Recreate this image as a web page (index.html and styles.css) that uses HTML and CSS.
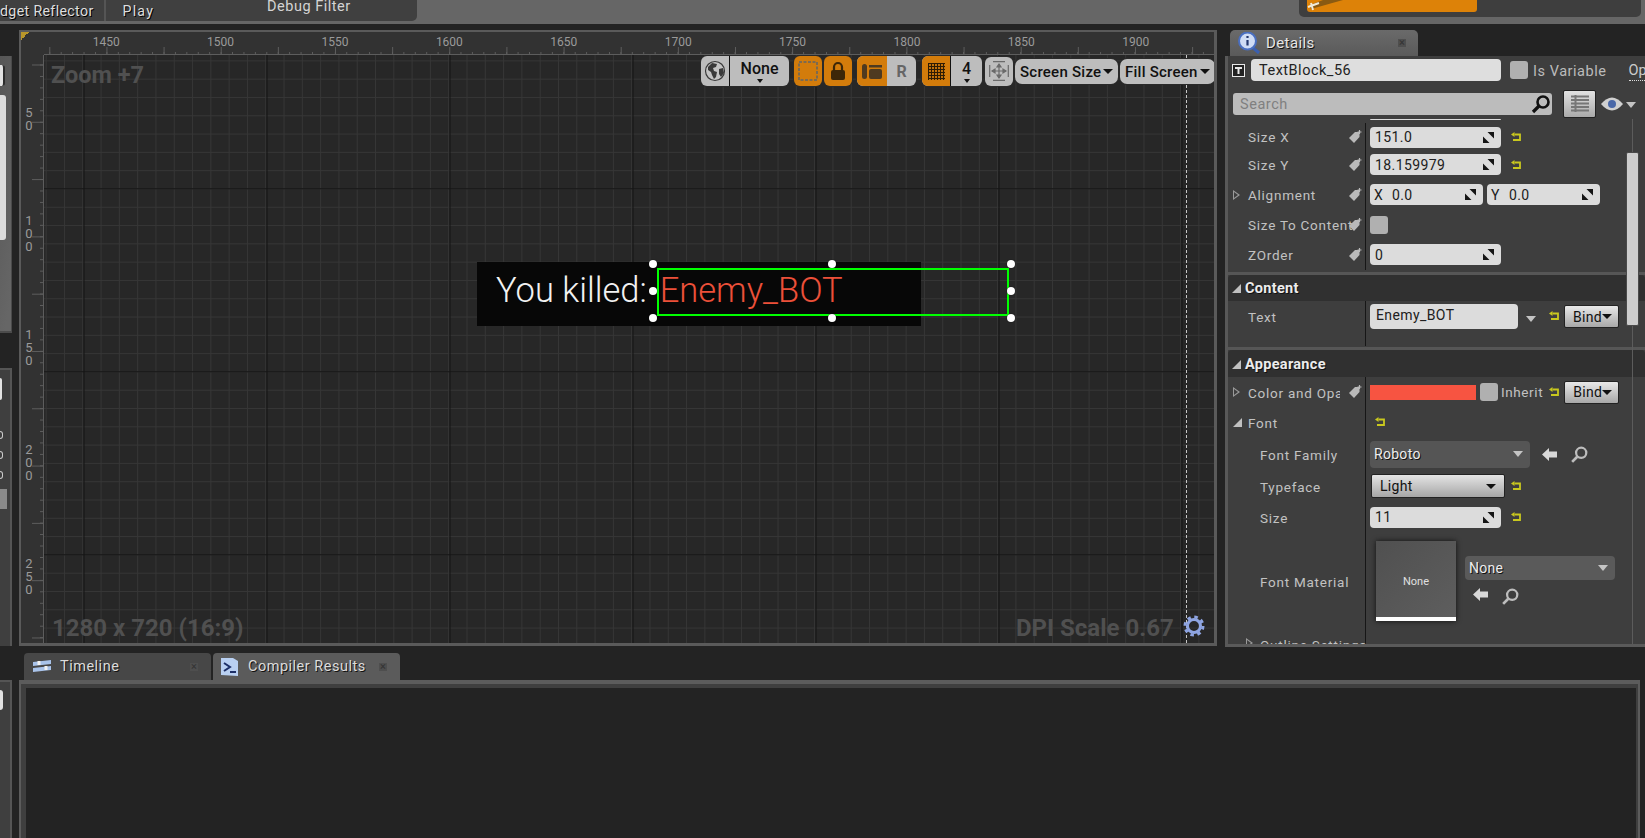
FILE: index.html
```html
<!DOCTYPE html>
<html lang="en">
<head>
<meta charset="utf-8">
<title>Widget Designer</title>
<link rel="stylesheet" href="styles.css">
</head>
<body>
<svg class="defs" width="0" height="0">
  <symbol id="spin" viewBox="0 0 11 11"><path d="M0 11V4.500L6.500 11zM11 0v6.500L4.500 0z" fill="#151515"/></symbol>
  <symbol id="reset" viewBox="0 0 10 10"><path d="M3.500 2.500H9V8H2" fill="none" stroke="#c9c81e" stroke-width="1.800"/><path d="M0 2.500L3.500 0v5z" fill="#c9c81e"/></symbol>
  <symbol id="tag" viewBox="0 0 13 13"><path d="M0 8L6 2h4.500v5l-5.500 6z" fill="#b9b9b9"/><path d="M10.500 0v4M8.500 2h4" stroke="#b9b9b9" stroke-width="1.200"/></symbol>
  <symbol id="back" viewBox="0 0 15 13"><path d="M0 6.500L7 0v3.500h8v6H7V13z" fill="#d8d8d8"/></symbol>
  <symbol id="find" viewBox="0 0 15 15"><circle cx="9" cy="6" r="4.500" fill="none" stroke="#bdbdbd" stroke-width="2"/><path d="M5.500 9.500L1 14" stroke="#bdbdbd" stroke-width="2.400"/></symbol>
</svg>

<header class="topbar">
  <div class="tb-left">
    <span class="tb-text tb-reflector">dget Reflector</span>
    <span class="tb-sep"></span>
    <span class="tb-text tb-play">Play</span>
    <span class="tb-filter">Debug Filter</span>
  </div>
  <div class="tb-right">
    <div class="tb-orange">
      <svg class="tb-hammer" width="38" height="12" viewBox="0 0 38 12"><path d="M4 9L36 0H16L3 5z" fill="#8a5a12"/><path d="M1 7L12 3M4 3l2 7" stroke="#f0ead8" stroke-width="2"/></svg>
    </div>
  </div>
</header>

<main class="main">
  <aside class="strip">
    <div class="strip-a">
      <div class="pill-top pill-ring"></div>
      <div class="list-box"></div>
    </div>
    <div class="strip-b">
      <div class="pill-top pill-b"></div>
      <div class="diamond"></div>
      <div class="diamond"></div>
      <div class="diamond"></div>
      <div class="diamond diamond-on"></div>
    </div>
  </aside>

  <section class="designer">
    <div class="corner"></div>
    <div class="ruler-top">
      <span>1450</span><span>1500</span><span>1550</span><span>1600</span><span>1650</span><span>1700</span><span>1750</span><span>1800</span><span>1850</span><span>1900</span>
    </div>
    <div class="ruler-left">
      <span>50</span><span>100</span><span>150</span><span>200</span><span>250</span>
    </div>
    <div class="canvas">
      <div class="guide"></div>
      <div class="hud hud-zoom">Zoom +7</div>
      <div class="hud hud-res">1280 x 720 (16:9)</div>
      <div class="hud hud-dpi">DPI Scale 0.67</div>
      <svg class="gear" width="22" height="22" viewBox="0 0 22 22"><circle cx="11" cy="11" r="6.500" fill="none" stroke="#8fa5e2" stroke-width="3"/><circle cx="11" cy="11" r="9" fill="none" stroke="#8fa5e2" stroke-width="3" stroke-dasharray="3.500 3.570"/></svg>

      <div class="toolbar">
        <div class="tgroup tgroup-world">
          <div class="tcell tcell-globe">
            <svg width="22" height="22" viewBox="0 0 22 22"><circle cx="11" cy="11" r="9.500" fill="#c4c4c4" stroke="#3a3a3a" stroke-width="1.200"/><path d="M4 7l4-4 5 1-1 3-3 1 1 3 3 1-1 5-2 2-2-4-1-3-3-2zM15 9l4-1 1 5-3 4-2-3z" fill="#3a3a3a"/></svg>
          </div>
          <div class="tcell tcell-none"><b>None</b><i class="caret"></i></div>
        </div>
        <div class="tgroup tgroup-on tgroup-single">
          <svg width="20" height="20" viewBox="0 0 20 20"><rect x="1" y="1" width="18" height="18" fill="none" stroke="#7d6a50" stroke-width="2" stroke-dasharray="3 1.500"/></svg>
        </div>
        <div class="tgroup tgroup-on tgroup-single tgroup-lock">
          <svg width="18" height="20" viewBox="0 0 18 20"><path d="M5 9V6a4 4 0 0 1 8 0v3" fill="none" stroke="#3d2708" stroke-width="2.200"/><rect x="2" y="9" width="14" height="10" rx="2" fill="#3d2708"/></svg>
        </div>
        <div class="tgroup tgroup-pair">
          <div class="tcell tcell-on tcell-layout">
            <svg width="20" height="18" viewBox="0 0 20 18"><rect x="0" y="2" width="5" height="15" rx="2.500" fill="#4e3a20"/><rect x="7" y="3" width="13" height="2.500" fill="#4e3a20"/><rect x="7" y="7" width="13" height="10" rx="2" fill="#4e3a20"/></svg>
          </div>
          <div class="tcell tcell-r">R</div>
        </div>
        <div class="tgroup tgroup-grid">
          <div class="tcell tcell-on tcell-gridicon">
            <svg width="17" height="17" viewBox="0 0 17 17"><path d="M.5 0v17M3.500 0v17M6.500 0v17M9.500 0v17M12.500 0v17M15.500 0v17M0 .5h17M0 3.500h17M0 6.500h17M0 9.500h17M0 12.500h17M0 15.500h17" stroke="#2d1c05" stroke-width="1.200"/></svg>
          </div>
          <div class="tcell tcell-four"><b>4</b><i class="caret"></i></div>
        </div>
        <div class="tgroup tgroup-move">
          <svg width="20" height="20" viewBox="0 0 20 20" fill="none" stroke="#6a6a6a" stroke-width="1.200"><path d="M4 .7h12M4 19.300h12M.7 4v12M19.300 4v12M10 3v14M3 10h14"/><path d="M10 3L8 6h4zM10 17l-2-3h4zM3 10l3-2v4zM17 10l-3-2v4z" fill="#6a6a6a"/></svg>
        </div>
        <div class="tcombo tcombo-screen">Screen Size<i class="caret-lg"></i></div>
        <div class="tcombo tcombo-fill">Fill Screen<i class="caret-lg"></i></div>
      </div>

      <div class="widget">
        <span class="w-white">You killed:</span><span class="w-red">Enemy_BOT</span>
        <div class="w-select"></div>
        <div class="w-handles">
          <i></i><i></i><i></i><i></i><b></b><i></i><i></i><i></i><i></i>
        </div>
      </div>
    </div>
  </section>

  <section class="details">
    <div class="d-tab">
      <svg class="d-tab-icon" width="22" height="22" viewBox="0 0 22 22"><path d="M14 15l7 6" stroke="#3a5fb0" stroke-width="3"/><circle cx="9.500" cy="9" r="8.500" fill="#cfdcf5" stroke="#4a6fc0" stroke-width="2"/><path d="M9.500 4v2M9.500 8v5.500" stroke="#24386e" stroke-width="2.200"/></svg>
      <span class="d-tab-title">Details</span>
      <span class="close">×</span>
    </div>
    <div class="d-panel">
      <div class="d-name">
        <svg class="t-icon" width="13" height="13" viewBox="0 0 13 13"><rect width="13" height="13" fill="#e8e8e8"/><rect x="1" y="1" width="11" height="11" fill="#222"/><path d="M3 3h7v2H7.500v5h-2V5H3z" fill="#e8e8e8"/></svg>
        <div class="name-input">TextBlock_56</div>
        <div class="check"></div>
        <span class="isvar">Is Variable</span>
        <span class="op">Op</span>
      </div>
      <div class="d-search">
        <div class="search">
          <span>Search</span>
          <svg width="20" height="20" viewBox="0 0 20 20"><circle cx="12" cy="8" r="5.500" fill="none" stroke="#111" stroke-width="2.600"/><path d="M8 12l-6 6" stroke="#111" stroke-width="3.200"/></svg>
        </div>
        <div class="viewbtn">
          <svg width="18" height="18" viewBox="0 0 18 18"><path d="M0 1.500h18M0 5h18M0 8.500h18M0 12h18M0 15.500h18M4.500 0v17" stroke="#777" stroke-width="2"/></svg>
        </div>
        <svg class="eye" width="22" height="14" viewBox="0 0 22 14"><path d="M0 7q11-13 22 0q-11 13-22 0z" fill="#d0d0d0"/><circle cx="11" cy="7" r="4" fill="#4a68a8"/></svg>
        <i class="caret-soft"></i>
      </div>
      <div class="d-body">
        <div class="scroll-line"></div>
        <div class="scroll-thumb"></div>

        <div class="d-section d-section-first">
          <div class="clip-top"><div></div></div>
          <div class="row h28"><div class="lab">Size X<svg class="tag"><use href="#tag"/></svg></div><div class="val"><div class="num w131">151.0<svg class="spin"><use href="#spin"/></svg></div><svg class="rst"><use href="#reset"/></svg></div></div>
          <div class="row h27"><div class="lab">Size Y<svg class="tag"><use href="#tag"/></svg></div><div class="val"><div class="num w131">18.159979<svg class="spin"><use href="#spin"/></svg></div><svg class="rst"><use href="#reset"/></svg></div></div>
          <div class="row h33"><div class="lab"><i class="tri-open"></i>Alignment<svg class="tag"><use href="#tag"/></svg></div><div class="val"><div class="num w113"><em>X</em>0.0<svg class="spin"><use href="#spin"/></svg></div><div class="num w113"><em>Y</em>0.0<svg class="spin"><use href="#spin"/></svg></div></div></div>
          <div class="row h28"><div class="lab">Size To Content<svg class="tag"><use href="#tag"/></svg></div><div class="val"><div class="check check-row"></div></div></div>
          <div class="row h33 h-last"><div class="lab">ZOrder<svg class="tag"><use href="#tag"/></svg></div><div class="val"><div class="num w131">0<svg class="spin"><use href="#spin"/></svg></div></div></div>
        </div>

        <div class="d-section d-section-content">
          <div class="sec-head"><i class="tri-down"></i>Content</div>
          <div class="row h45"><div class="lab lab-top">Text</div><div class="val val-top">
            <div class="text-input">Enemy_BOT</div><i class="caret-soft caret-text"></i><svg class="rst rst-t"><use href="#reset"/></svg><div class="bind">Bind<i class="caret-bind"></i></div>
          </div></div>
        </div>

        <div class="d-section d-section-look">
          <div class="sec-head sec-head-tall"><i class="tri-down"></i>Appearance</div>
          <div class="row h30"><div class="lab"><i class="tri-open"></i><span class="lab-clip">Color and Opacity</span><svg class="tag"><use href="#tag"/></svg></div><div class="val val-color">
            <div class="swatch"></div><div class="check"></div><span class="inherit">Inherit</span><svg class="rst rst-i"><use href="#reset"/></svg><div class="bind">Bind<i class="caret-bind"></i></div>
          </div></div>
          <div class="row h30"><div class="lab"><i class="tri-down tri-font"></i>Font</div><div class="val"><svg class="rst rst-f"><use href="#reset"/></svg></div></div>
          <div class="row h34"><div class="lab lab-in">Font Family</div><div class="val"><div class="drop w160">Roboto<i class="caret-soft"></i></div><svg class="ico-back"><use href="#back"/></svg><svg class="ico-find"><use href="#find"/></svg></div></div>
          <div class="row h30"><div class="lab lab-in">Typeface</div><div class="val"><div class="combo">Light<i class="caret-bind"></i></div><svg class="rst"><use href="#reset"/></svg></div></div>
          <div class="row h32"><div class="lab lab-in">Size</div><div class="val"><div class="num w131">11<svg class="spin"><use href="#spin"/></svg></div><svg class="rst"><use href="#reset"/></svg></div></div>
          <div class="row h96"><div class="lab lab-in">Font Material</div><div class="val val-mat">
            <div class="thumb"><span>None</span></div>
            <div class="mat-side">
              <div class="drop w150">None<i class="caret-soft"></i></div>
              <div class="mat-icons"><svg class="ico-back"><use href="#back"/></svg><svg class="ico-find"><use href="#find"/></svg></div>
            </div>
          </div></div>
          <div class="row h30"><div class="lab lab-in lab-outline"><i class="tri-open tri-small"></i>Outline Settings</div><div class="val"></div></div>
        </div>
      </div>
    </div>
  </section>
</main>

<section class="bottom">
  <div class="strip-c"><div class="pill-top pill-c"></div></div>
  <div class="bottom-main">
    <div class="b-tabs">
      <div class="b-tab">
        <svg width="20" height="16" viewBox="0 0 20 16"><path d="M1 3l18-2v4L1 7zM1 9l18-2v4L1 13z" fill="#a9c3ea"/><path d="M7 2v4M14 7v4" stroke="#f2f2f2" stroke-width="3"/></svg>
        <span>Timeline</span><span class="close">×</span>
      </div>
      <div class="b-tab b-tab-on">
        <svg width="18" height="20" viewBox="0 0 18 20"><path d="M0 1h12l5 3v15l-17-1z" fill="#b9d0f2"/><path d="M3 6l6 4-6 4" fill="none" stroke="#1d2f68" stroke-width="2"/><path d="M9 15h6" stroke="#1d2f68" stroke-width="2"/></svg>
        <span>Compiler Results</span><span class="close">×</span>
      </div>
    </div>
    <div class="b-panel"><div class="b-inner"></div></div>
  </div>
</section>
</body>
</html>
```
FILE: styles.css
```css
* { box-sizing: border-box; }
html, body { margin: 0; padding: 0; }
body {
  width: 1645px;
  height: 838px;
  overflow: hidden;
  background: #232323;
  color: #c6c6c6;
  font-family: Roboto, "Liberation Sans", sans-serif;
  font-size: 14px;
}
i, em { font-style: normal; }
.defs { position: absolute; }

/* top */
.topbar {
  height: 24px;
  background: #666;
  display: flex;
  justify-content: space-between;
}
.tb-left {
  width: 417px;
  height: 21px;
  background: #404040;
  border-radius: 0 0 5px 0;
  display: flex;
  align-items: center;
  overflow: hidden;
}
.tb-text { color: #dedede; font-size: 14.200px; letter-spacing: .35px; text-shadow: 1px 1px 0 #000; }
.tb-sep { width: 2px; height: 21px; margin-left: 10px; background: #555; }
.tb-play { margin-left: 17px; letter-spacing: 1.200px; }
.tb-filter { margin-left: 113px; margin-top: -8px; color: #d4d4d4; font-size: 14.500px; line-height: 16px; letter-spacing: .5px; white-space: nowrap; }
.tb-right {
  width: 342px;
  height: 17px;
  margin-right: 4px;
  padding-left: 8px;
  background: #3e3e3e;
  border-radius: 0 0 5px 5px;
}
.tb-orange { width: 170px; height: 12px; background: #dd8208; border-radius: 0 0 3px 3px; overflow: hidden; }
.tb-hammer { display: block; }

/* main */
.main { display: flex; height: 617px; margin-top: 6px; }

.strip { width: 12px; margin-right: 7px; padding-top: 26px; display: flex; flex-direction: column; gap: 35px; }
.strip-a { height: 277px; background: linear-gradient(100deg, #565656, #666 90%); border-right: 1px solid #4a4a4a; border-bottom: 2px solid #4c4c4c; padding-top: 9px; }
.strip-b { flex: 1; height: 277px; background: #3f3f3f; border-right: 2px solid #555; border-top: 2px solid #555; padding-top: 8px; margin-bottom: 1px; }
.pill-top { width: 5px; height: 21px; background: #e2e2e2; border-radius: 0 3px 3px 0; }
.pill-ring { border-right: 2px solid #2c2c2c; }
.list-box { width: 6px; height: 145px; margin-top: 9px; background: #dcdcdc; border-radius: 0 3px 3px 0; }
.pill-b { width: 2px; height: 22px; margin-bottom: 31px; }
.diamond { width: 3px; height: 8px; margin-bottom: 12px; border: 1px solid #ccc; border-left: 0; border-radius: 0 4px 4px 0; }
.diamond-on { width: 7px; height: 20px; margin: -2px 0 0; background: #8a8a8a; border: 0; border-radius: 0; }

/* designer */
.designer {
  width: 1198px;
  height: 616px;
  background: #323232;
  border: 2px solid #5a5a5a;
  border-right-width: 3px;
  border-bottom-width: 3px;
  display: grid;
  grid-template-columns: 23px 1fr;
  grid-template-rows: 23px 1fr;
  position: relative;
  overflow: hidden;
}
.corner {
  width: 12px;
  height: 12px;
  background: linear-gradient(135deg, #b8962a 50%, transparent 50%);
  margin: -2px 0 0 -2px;
}
.ruler-top {
  display: flex;
  padding-left: 5px;
  background:
    linear-gradient(90deg, #5d5d5d 1px, transparent 1px) 5.300px 15px / 57.150px 7px repeat-x,
    linear-gradient(90deg, #5d5d5d 1px, transparent 1px) 5.300px 20px / 11.430px 3px repeat-x;
  border-bottom: 1px solid #5d5d5d;
}
.ruler-top span { width: 114.400px; flex: none; text-align: center; font-size: 12px; line-height: 14px; padding-top: 3px; color: #9a9a9a; }
.ruler-left {
  display: flex;
  flex-direction: column;
  padding-top: 6.500px;
  background:
    linear-gradient(#5d5d5d 1px, transparent 1px) 11px 9.500px / 12px 57.300px repeat-y,
    linear-gradient(#5d5d5d 1px, transparent 1px) 19px 9.500px / 4px 11.460px repeat-y;
  border-right: 1px solid #5d5d5d;
}
.ruler-left span { height: 114.500px; flex: none; width: 16px; display: grid; grid-template-columns: 8px; align-content: center; justify-content: center; word-break: break-all; text-align: center; font-size: 13px; line-height: 13px; color: #9a9a9a; }

.canvas {
  position: relative;
  overflow: hidden;
  background-color: #272727;
  background-image:
    linear-gradient(90deg, #121212 1px, transparent 1px),
    linear-gradient(#121212 1px, transparent 1px),
    linear-gradient(90deg, #363636 1px, transparent 1px),
    linear-gradient(#363636 1px, transparent 1px);
  background-size: 183px 100%, 100% 183px, 18.300px 100%, 100% 18.300px;
  background-position: 39.500px 0, 0 133.300px, 1.700px 0, 0 5.400px;
}
.guide { position: absolute; left: 1142px; top: 0; bottom: 0; border-left: 1px dashed #c8c8c8; }
.hud { position: absolute; color: #505050; font-weight: 700; font-size: 24px; line-height: 30px; white-space: nowrap; }
.hud-zoom { left: 7px; top: 5px; font-size: 23.500px; }
.hud-res { left: 8px; top: 558px; }
.hud-dpi { left: 972px; top: 558px; }
.gear { position: absolute; left: 1139px; top: 560px; }

/* toolbar */
.toolbar { position: absolute; left: 657px; top: 1px; width: 514px; height: 30px; display: flex; align-items: center; color: #111; }
.tgroup { height: 30px; display: flex; align-items: center; border-radius: 6px; box-shadow: 0 0 0 1px #2a2a2a; overflow: hidden; background: #bdbdbd; flex: none; }
.tcell { height: 100%; display: flex; align-items: center; justify-content: center; position: relative; }
.tgroup-world { width: 88px; }
.tcell-globe { width: 29px; border-right: 1px solid #111; }
.tcell-none { flex: 1; }
.tcell-none b, .tcell-four b { font-size: 16px; font-weight: 500; margin-top: -5px; }
.caret { position: absolute; left: 50%; bottom: 3px; margin-left: -3px; border: 3px solid transparent; border-top: 4px solid #111; border-bottom: 0; }
.tgroup-on { background: #d37c0b; }
.tgroup-single { width: 28px; margin-left: 5px; justify-content: center; }
.tgroup-lock { margin-left: 2px; }
.tgroup-pair { width: 59px; margin-left: 5px; }
.tcell-on { background: #d37c0b; }
.tcell-layout { width: 30px; }
.tcell-r { flex: 1; font-size: 16px; font-weight: 700; color: #666; }
.tgroup-grid { width: 60px; margin-left: 6px; }
.tcell-gridicon { width: 29px; border-right: 1px solid #111; }
.tcell-four { flex: 1; }
.tgroup-move { width: 28px; height: 29px; margin-left: 3px; justify-content: center; }
.tcombo { height: 25px; margin-top: 1px; display: flex; align-items: center; justify-content: space-between; background: #bdbdbd; border-radius: 7px; box-shadow: 0 0 0 1px #2a2a2a; font-size: 15px; font-weight: 500; letter-spacing: .25px; padding: 0 5px; flex: none; white-space: nowrap; }
.tcombo-screen { width: 102.500px; margin-left: 2px; }
.tcombo-fill { width: 94.600px; margin-left: 2.500px; }
.caret-lg { width: 0; height: 0; border: 5px solid transparent; border-top: 5px solid #111; border-bottom: 0; }

/* widget */
.widget {
  position: absolute;
  left: 433px;
  top: 207px;
  width: 444px;
  height: 64px;
  background: #070707;
  padding: 0 0 8px 19px;
  display: flex;
  align-items: center;
  font-family: Roboto, sans-serif;
  font-weight: 300;
  font-size: 34.500px;
  white-space: nowrap;
}
.w-white { color: #f2f2f2; }
.w-red { color: #ec5039; margin-left: 13px; }
.w-select { position: absolute; left: 180px; top: 6px; width: 352px; height: 48px; border: 2px solid #0f0; }
.w-handles {
  position: absolute;
  left: 172px;
  top: -2px;
  width: 366px;
  height: 62px;
  display: grid;
  grid-template-columns: repeat(3, 8px);
  grid-template-rows: repeat(3, 8px);
  justify-content: space-between;
  align-content: space-between;
}
.w-handles i { width: 8px; height: 8px; border-radius: 50%; background: #fff; box-shadow: 0 0 1px #000; }

/* details */
.details { width: 420px; margin-left: 8px; display: flex; flex-direction: column; }
.d-tab { width: 188px; height: 26px; margin-left: 5px; padding: 0 12px 0 8px; background: linear-gradient(#6a6a6a, #5a5a5a); border-radius: 5px 5px 0 0; display: flex; align-items: center; gap: 6px; flex: none; }
.d-tab-icon { flex: none; }
.d-tab-title { flex: 1; font-size: 15px; letter-spacing: .4px; color: #e6e6e6; text-shadow: 1px 1px 0 #111; }
.close { width: 8px; height: 8px; color: #333; background: #4e4e4e; font-size: 11px; line-height: 8px; text-align: center; flex: none; }
.d-panel { flex: 1; background: #3e3e3e; border-left: 3px solid #585858; border-bottom: 3px solid #5a5a5a; display: flex; flex-direction: column; min-height: 0; }
.d-name { height: 32px; display: flex; align-items: flex-start; padding: 3px 0 0 4px; flex: none; white-space: nowrap; overflow: hidden; }
.t-icon { flex: none; margin-top: 5px; }
.name-input { width: 250px; height: 22px; margin-left: 6px; padding-left: 8px; background: #dedede; border-radius: 4px; color: #222; font-size: 14.500px; line-height: 23px; letter-spacing: .5px; flex: none; }
.check { width: 18px; height: 18px; background: #b0b0b0; border-radius: 3px; flex: none; }
.d-name .check { margin-left: 9px; margin-top: 2px; }
.isvar { margin-left: 5px; margin-top: 3px; line-height: 20px; font-size: 14.500px; letter-spacing: .55px; color: #bbb; }
.op { margin-left: 22px; margin-top: 3px; line-height: 18px; font-size: 14.500px; color: #ccc; border-bottom: 1px dotted #ddd; }
.d-search { height: 31px; display: flex; align-items: flex-start; padding-left: 5px; flex: none; }
.search { width: 319px; height: 22px; margin-top: 5px; padding: 0 1px 0 7px; background: #bcbcbc; border-radius: 3px; display: flex; align-items: center; justify-content: space-between; color: #808080; font-size: 14.500px; letter-spacing: .55px; }
.viewbtn { width: 33px; height: 28px; margin-left: 11px; margin-top: 2px; background: linear-gradient(#e2e2e2, #aaa); border: 1px solid #222; border-radius: 2px; display: flex; align-items: center; justify-content: center; }
.eye { margin-left: 5px; margin-top: 9px; }
.caret-soft { width: 0; height: 0; border: 5px solid transparent; border-top: 6px solid #c4c4c4; border-bottom: 0; display: block; flex: none; }
.d-search .caret-soft { margin-left: 3px; margin-top: 14px; }

.d-body { flex: 1; position: relative; overflow: hidden; min-height: 0; }
.scroll-line { position: absolute; left: 404px; top: 0; bottom: 0; width: 1px; background: #5c5c5c; z-index: 2; }
.scroll-thumb { position: absolute; left: 398px; top: 33px; width: 13px; height: 174px; background: #cdcdcd; border: 1px solid #4a4a4a; border-radius: 2px; z-index: 3; }
.d-section { border-bottom: 3px solid #565656; }
.d-section-first { padding-bottom: 2px; height: 156px; }
.d-section-content { height: 75px; padding-bottom: 0; }
.clip-top { height: 4px; padding-left: 142px; }
.clip-top div { width: 131px; height: 1px; background: #dcdcdc; border-radius: 0 0 3px 3px; }
.row { display: flex; }
.h27 { height: 27px; } .h28 { height: 28px; } .h30 { height: 30px; } .h32 { height: 32px; }
.h33 { height: 33px; } .h34 { height: 34px; } .h45 { height: 45px; } .h96 { height: 96px; }
.h-last { height: 31px; }
.lab { width: 138px; flex: none; padding-left: 20px; display: flex; align-items: center; position: relative; font-size: 13.500px; letter-spacing: .75px; color: #c2c2c2; white-space: nowrap; border-right: 1px solid #161616; }
.d-section-look .lab { padding-top: 2px; }
.lab-top { align-items: flex-start; padding-top: 8px; }
.lab-in, .d-section-look .lab-in { padding-left: 32px; }
.lab-clip { width: 92px; overflow: hidden; }
.d-section-look .lab-outline { align-items: flex-start; padding-top: 8px; }
.val { flex: 1; display: flex; align-items: center; padding-left: 4px; gap: 10px; min-width: 0; }
.tag { position: absolute; left: 121px; top: 50%; margin-top: -7px; width: 13px; height: 13px; }
.num { height: 21px; padding: 0 5px; background: #dcdcdc; border-radius: 4px; display: flex; align-items: center; justify-content: flex-start; position: relative; color: #202020; font-size: 14px; letter-spacing: .4px; flex: none; }
.num em { width: 18px; }
.w131 { width: 131px; }
.w113 { width: 113px; padding-left: 4px; }
.w113 + .w113 { margin-left: -6px; }
.spin { position: absolute; right: 7px; top: 5px; width: 11px; height: 11px; }
.rst { width: 10px; height: 10px; flex: none; }
.tri-open { position: absolute; left: 5px; top: 50%; margin-top: -5px; width: 0; height: 0; border: 5px solid transparent; border-left: 7px solid #9a9a9a; border-right: 0; }
.tri-open::after { content: ""; position: absolute; left: -6px; top: -3px; border: 3px solid transparent; border-left: 4px solid #3e3e3e; border-right: 0; }
.tri-small { left: 18px; top: 14px; }
.tri-down { position: absolute; left: 4px; top: 50%; margin-top: -4px; width: 0; height: 0; border-bottom: 9px solid #c0c0c0; border-left: 9px solid transparent; }
.tri-font { left: 5px; }
.sec-head { height: 26px; padding: 1px 0 0 17px; background: #303030; position: relative; display: flex; align-items: center; font-size: 14.500px; font-weight: 700; letter-spacing: .3px; color: #ececec; text-shadow: 1px 1px 0 #111; border-radius: 4px 4px 0 0; }
.sec-head-tall { height: 27px; padding-top: 2px; }
.val-top { align-items: flex-start; padding-top: 3px; gap: 0; }
.text-input { width: 148px; height: 25px; padding-left: 6px; background: #dcdcdc; border-radius: 4px; color: #202020; font-size: 14px; line-height: 23px; letter-spacing: .4px; flex: none; }
.caret-text { margin: 12px 0 0 8px; }
.rst-t { margin: 7px 0 0 13px; }
.bind { width: 55px; height: 23px; margin-top: 1px; padding: 0 6px 0 8px; background: linear-gradient(#e8e8e8, #a8a8a8); border: 1px solid #222; border-radius: 2px; display: flex; align-items: center; justify-content: space-between; color: #111; font-size: 14px; letter-spacing: .3px; flex: none; }
.rst-t + .bind { margin-left: 5px; }
.caret-bind { width: 0; height: 0; border: 5px solid transparent; border-top: 5px solid #111; border-bottom: 0; flex: none; }
.val-color { gap: 0; }
.swatch { width: 106px; height: 15px; background: #f75441; flex: none; }
.val-color .check { margin-left: 4px; }
.inherit { margin-left: 3px; font-size: 13.500px; letter-spacing: .6px; color: #c2c2c2; }
.rst-i { margin-left: 6px; }
.val-color .bind { margin: 0 0 0 5px; }
.rst-f { margin-left: 5px; }
.drop { height: 27px; padding: 0 7px 0 4px; background: #555; border-radius: 4px; display: flex; align-items: center; justify-content: space-between; color: #ededed; font-size: 14px; letter-spacing: .3px; text-shadow: 1px 1px 0 #111; flex: none; }
.w160 { width: 160px; }
.w150 { width: 150px; height: 24px; background: #5a5a5a; }
.ico-back { width: 15px; height: 13px; flex: none; margin-left: 2px; }
.ico-find { width: 17px; height: 17px; flex: none; margin-left: 4px; }
.combo { width: 134px; height: 24px; margin-left: 1px; padding: 0 8px; background: linear-gradient(#e4e4e4, #a6a6a6); border: 1px solid #222; border-radius: 2px; display: flex; align-items: center; justify-content: space-between; color: #111; font-size: 14px; letter-spacing: .3px; flex: none; }
.combo + .rst { margin-left: -4px; }
.val-mat { gap: 9px; padding-left: 10px; }
.thumb { width: 80px; height: 80px; padding-top: 4px; background: linear-gradient(135deg, #505050, #5e5e5e); border-bottom: 4px solid #fff; box-shadow: 0 0 5px #111; display: flex; align-items: center; justify-content: center; color: #e0e0e0; font-size: 11px; flex: none; }
.mat-side { display: flex; flex-direction: column; gap: 8px; margin-top: -2px; }
.mat-icons { display: flex; padding-left: 6px; gap: 10px; }

/* bottom */
.bottom { display: flex; height: 191px; overflow: hidden; }
.strip-c { width: 12px; margin-right: 7px; margin-top: 33px; background: #3f3f3f; border-right: 2px solid #555; border-top: 2px solid #555; padding-top: 8px; flex: none; }
.pill-c { width: 3px; height: 20px; }
.bottom-main { width: 1621px; display: flex; flex-direction: column; padding-top: 6px; }
.b-tabs { display: flex; gap: 2px; padding-left: 5px; height: 27px; flex: none; }
.b-tab { width: 187px; padding: 0 13px 0 8px; background: #474747; border-radius: 4px 4px 0 0; display: flex; align-items: center; gap: 8px; }
.b-tab svg { flex: none; }
.b-tab span:first-of-type { flex: 1; font-size: 14.500px; letter-spacing: .5px; color: #dcdcdc; text-shadow: 1px 1px 0 #111; }
.b-tab-on { background: #5b5b5b; }
.b-tab-on svg { margin-right: 1px; }
.b-panel { flex: 1; min-height: 0; background: #3f3f3f; border: solid #5c5c5c; border-width: 4px 2px 0 2px; padding: 4px 2px 0 5px; }
.b-inner { height: 100%; background: #232323; }
```
